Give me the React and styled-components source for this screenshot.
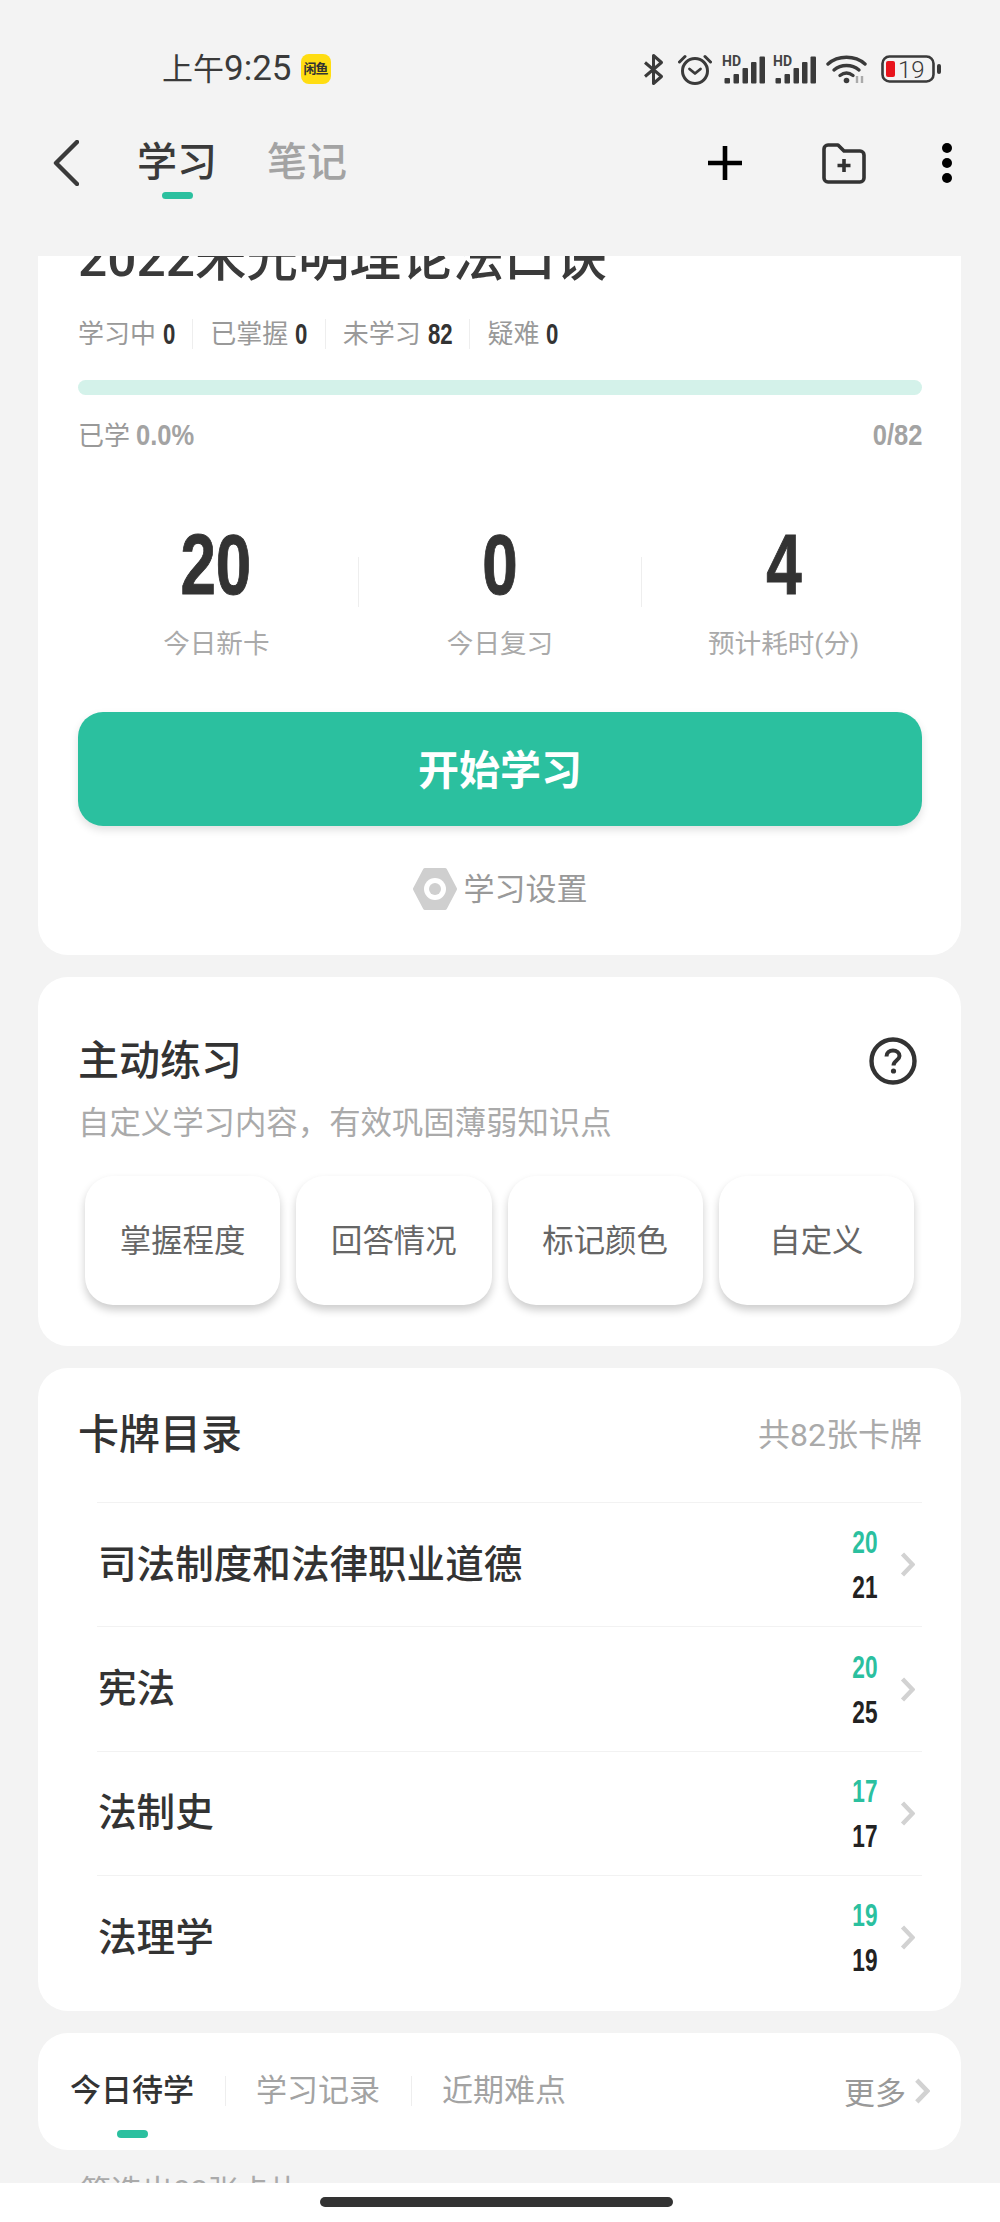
import React from 'react';
import styled, { createGlobalStyle } from 'styled-components';

const GlobalStyle = createGlobalStyle`
  * { box-sizing: border-box; }
  html, body { margin: 0; padding: 0; background: #f3f3f3; }
  body { font-family: Roboto, "Noto Sans CJK SC", sans-serif; color: #333; }
`;

const GREEN = '#2bc09f';
const NUMBER_FONT = '"Liberation Sans", sans-serif';

const Page = styled.div`
  width: 1000px;
  height: 2222px;
  display: flex;
  flex-direction: column;
  overflow: hidden;
  background: #f3f3f3;
`;

const StatusBar = styled.div`
  flex: none;
  height: 138px;
  padding: 0 59px 0 162px;
  display: flex;
  align-items: center;
  justify-content: space-between;
`;

const Clock = styled.div`
  display: flex;
  align-items: center;
  gap: 9px;
  font-size: 31px;
  line-height: 40px;
  color: #3a3a3a;
  span:first-child {
    font-size: 35px;
  }
`;

const ClockCjk = styled.i`
  font-style: normal;
  font-size: 31px;
`;

const Badge = styled.span`
  width: 30px;
  height: 30px;
  border-radius: 8px;
  background: #ffdd12;
  color: #333;
  font-size: 13px;
  font-weight: 700;
  line-height: 30px;
  text-align: center;
  letter-spacing: -1px;
`;

const StatusIcons = styled.div`
  display: flex;
  align-items: center;
`;

const SignalGap = styled.div`
  width: 8px;
`;

const SignalIcon = styled.svg`
  overflow: visible;
`;

const NavBar = styled.div`
  flex: none;
  height: 50px;
  margin-bottom: 68px;
  padding: 0 48px 0 53px;
  display: flex;
  align-items: center;
`;

const NavTab = styled.div`
  position: relative;
  margin-left: ${p => p.$gap}px;
  font-size: 40px;
  line-height: 50px;
  font-weight: 500;
  color: ${p => (p.$active ? '#3a3a3a' : '#a3a3a3')};
  &::after {
    content: '';
    display: ${p => (p.$active ? 'block' : 'none')};
    position: absolute;
    left: 25px;
    bottom: -11px;
    width: 31px;
    height: 7px;
    border-radius: 4px;
    background: ${GREEN};
  }
`;

const NavActions = styled.div`
  margin-left: auto;
  display: flex;
  align-items: center;
  gap: 76px;
`;

const PlusSlot = styled.div`
  display: flex;
  margin-right: 4px;
`;

const Scroller = styled.div`
  flex: 1;
  min-height: 0;
  overflow: hidden;
  padding: 0 39px 0 38px;
  display: flex;
  flex-direction: column;
  gap: 22px;
`;

const Card = styled.section`
  flex: none;
  background: #fff;
  border-radius: 30px;
  padding: 0 39px 0 40px;
`;

const PlanCard = styled(Card)`
  margin-top: -40px;
  padding-top: 13px;
  padding-bottom: 44px;
`;

const PlanTitle = styled.h1`
  margin: 0;
  font-size: 51.5px;
  line-height: 60px;
  font-weight: 500;
  color: #3a3a3a;
  white-space: nowrap;
`;

const Counts = styled.div`
  margin-top: 30px;
  height: 30px;
  display: flex;
  align-items: center;
`;

const Count = styled.div`
  display: flex;
  align-items: center;
  gap: 7px;
  font-size: 26px;
  line-height: 30px;
  color: #999;
  padding-right: 17px;
  margin-right: 17px;
  border-right: ${p => (p.$last ? 'none' : '1px solid #eee')};
`;

// squeezed digits, the app's number face is a condensed one
const CountValue = styled.b`
  display: inline-block;
  font-family: ${NUMBER_FONT};
  font-size: 30px;
  font-weight: 700;
  color: #333;
  transform: scaleX(0.74);
  transform-origin: left center;
  margin-right: ${p => -0.145 * p.$digits}em;
`;

const Track = styled.div`
  margin-top: 31px;
  height: 15px;
  border-radius: 8px;
  background: #d4f2ea;
`;

const TrackLabels = styled.div`
  margin-top: 25px;
  height: 30px;
  display: flex;
  justify-content: space-between;
  font-size: 26px;
  line-height: 30px;
  color: #999;
`;

const TrackValue = styled.span`
  display: inline-block;
  font-family: ${NUMBER_FONT};
  font-size: 29px;
  line-height: 30px;
  font-weight: 700;
  color: #a3a3a3;
  transform: scaleX(0.88);
  transform-origin: ${p => (p.$right ? 'right' : 'left')} center;
`;

const Figures = styled.div`
  margin: 74px -3px 0;
  display: grid;
  grid-template-columns: 1fr 1px 1fr 1px 1fr;
`;

const Figure = styled.div`
  display: flex;
  flex-direction: column;
  align-items: center;
`;

const FigureValue = styled.div`
  font-family: ${NUMBER_FONT};
  font-size: 86px;
  line-height: 80px;
  font-weight: 700;
  color: #333;
  -webkit-text-stroke: 1px #333;
  transform: scaleX(0.74);
`;

const FigureLabel = styled.div`
  margin-top: 25px;
  font-size: 26.6px;
  line-height: 30px;
  color: #aaa;
`;

const FigureRule = styled.div`
  margin-top: 33px;
  height: 50px;
  background: #eee;
`;

const StartButton = styled.button`
  display: block;
  width: 100%;
  height: 114px;
  margin-top: 53px;
  padding: 0 0 5px;
  border: none;
  border-radius: 25px;
  background: ${GREEN};
  box-shadow: 0 4px 8px rgba(0, 0, 0, 0.12);
  color: #fff;
  font-family: inherit;
  font-size: 41px;
  font-weight: 700;
`;

const SettingsLink = styled.div`
  margin-top: 41px;
  height: 44px;
  display: flex;
  align-items: center;
  justify-content: center;
  gap: 7px;
  font-size: 31px;
  color: #999;
  span {
    padding-bottom: 5px;
  }
`;

const PracticeCard = styled(Card)`
  padding-top: 59px;
  padding-bottom: 41px;
`;

const CardHead = styled.div`
  display: flex;
  align-items: center;
  justify-content: space-between;
  height: 50px;
`;

const CardTitle = styled.h2`
  margin: 0;
  font-size: 41px;
  line-height: 50px;
  font-weight: 500;
  color: #333;
`;

const HelpSlot = styled.div`
  padding-right: 5px;
  display: flex;
`;

const CardNote = styled.div`
  margin-top: 18px;
  font-size: 31.4px;
  line-height: 40px;
  color: #aaa;
`;

const Modes = styled.div`
  margin: 32px 8px 0 7px;
  display: grid;
  grid-template-columns: repeat(4, 1fr);
  gap: 16px;
`;

const Mode = styled.div`
  height: 129px;
  padding-bottom: 5px;
  border-radius: 28px;
  background: #fff;
  box-shadow: 0 5px 9px rgba(0, 0, 0, 0.2);
  display: flex;
  align-items: center;
  justify-content: center;
  font-size: 31.4px;
  color: #666;
`;

const CatalogCard = styled(Card)`
  padding-top: 42px;
  padding-bottom: 11px;
`;

const CatalogCount = styled.div`
  font-size: 32px;
  line-height: 50px;
  color: #aaa;
`;

const Catalog = styled.div`
  margin: 42px 0 0 19px;
`;

const Chapter = styled.div`
  height: 124.4px;
  padding-right: 7px;
  border-top: 1px solid #f2f2f2;
  display: flex;
  align-items: center;
`;

const ChapterName = styled.div`
  flex: 1;
  padding: 0 0 8px 1px;
  font-size: 38.6px;
  font-weight: 500;
  color: #333;
`;

const ChapterCounts = styled.div`
  margin-right: 23px;
  padding-top: 2px;
  display: flex;
  flex-direction: column;
  align-items: flex-end;
  gap: 9px;
  font-family: ${NUMBER_FONT};
  font-size: 31px;
  line-height: 36px;
  font-weight: 700;
`;

const DueCount = styled.span`
  color: ${GREEN};
  transform: scaleX(0.73);
  transform-origin: right center;
`;

const TotalCount = styled.span`
  color: #222;
  transform: scaleX(0.73);
  transform-origin: right center;
`;

const TodayCard = styled(Card)`
  height: 117px;
  padding: 43px 31px 0 32px;
`;

const TodayTabs = styled.div`
  height: 30px;
  display: flex;
  align-items: center;
  gap: 30.5px;
`;

const TodayTab = styled.div`
  font-size: 31px;
  line-height: 30px;
  font-weight: ${p => (p.$active ? 500 : 400)};
  color: ${p => (p.$active ? '#333' : '#a3a3a3')};
`;

const TabRule = styled.div`
  width: 1px;
  height: 30px;
  background: #eee;
`;

const More = styled.div`
  margin-left: auto;
  display: flex;
  align-items: center;
  gap: 8px;
  font-size: 31px;
  color: #999;
`;

const TabMark = styled.div`
  width: 31px;
  height: 8px;
  margin: 24px 0 0 47px;
  border-radius: 4px;
  background: ${GREEN};
`;

const Filtered = styled.div`
  flex: none;
  padding-left: 42px;
  font-size: 31px;
  line-height: 40px;
  color: #aaa;
`;

const HomeBar = styled.div`
  flex: none;
  height: 39px;
  background: #fff;
  display: flex;
  justify-content: center;
  padding: 14px 7px 0 0;
`;

const HomePill = styled.div`
  width: 353px;
  height: 10px;
  border-radius: 5px;
  background: #333;
`;

const Signal = () => (
  <SignalIcon width="43" height="29" viewBox="0 0 43 29">
    <text x="0" y="11" fontFamily="Roboto, sans-serif" fontSize="14" fontWeight="700" fill="#444">HD</text>
    <g fill="#3a3a3a">
      <rect x="2.5" y="23" width="5.5" height="5.5" rx="1" />
      <rect x="11.5" y="19" width="5.5" height="9.5" rx="1" />
      <rect x="20.5" y="13" width="5.5" height="15.5" rx="1" />
      <rect x="29" y="7" width="5.5" height="21.5" rx="1" />
      <rect x="37.5" y="1.5" width="5.5" height="27" rx="1" />
    </g>
  </SignalIcon>
);

const StatusGlyphs = () => (
  <StatusIcons>
    <svg width="22" height="33" viewBox="0 0 22 33" style={{ marginRight: 13 }}>
      <path d="M2 9.5 18.5 23.5 10.5 30.5V2.5L18.5 9.5 2 23.5" fill="none" stroke="#3a3a3a" strokeWidth="3" strokeLinejoin="round" />
    </svg>
    <svg width="34" height="32" viewBox="0 0 34 32" style={{ marginRight: 10 }}>
      <circle cx="17" cy="18" r="12.5" fill="none" stroke="#3a3a3a" strokeWidth="3" />
      <path d="M11.5 16 17 20.5 22.5 16" fill="none" stroke="#3a3a3a" strokeWidth="2.8" strokeLinecap="round" strokeLinejoin="round" />
      <path d="M1.5 9 7 3.5M32.5 9 27 3.5" stroke="#3a3a3a" strokeWidth="3" strokeLinecap="round" />
    </svg>
    <Signal />
    <SignalGap />
    <Signal />
    <svg width="43" height="30" viewBox="0 0 43 30" style={{ marginLeft: 10, marginRight: 12 }}>
      <path d="M2 10C12 1 29 1 39 10" fill="none" stroke="#3a3a3a" strokeWidth="3.4" strokeLinecap="round" />
      <path d="M8 16C15 10 26 10 33 16" fill="none" stroke="#3a3a3a" strokeWidth="3.4" strokeLinecap="round" />
      <path d="M14 21.5C18 18.5 23 18.5 27 21.5" fill="none" stroke="#3a3a3a" strokeWidth="3.4" strokeLinecap="round" />
      <circle cx="20.5" cy="26.5" r="2.8" fill="#3a3a3a" />
      <path d="M31 29V22M36 22V29" stroke="#aaa" strokeWidth="2.4" />
    </svg>
    <svg width="60" height="28" viewBox="0 0 60 28">
      <rect x="1.5" y="1.5" width="51" height="25" rx="7" fill="none" stroke="#3a3a3a" strokeWidth="2.6" />
      <rect x="5" y="6" width="9" height="16" rx="2" fill="#e8141c" />
      <text x="17" y="23" fontFamily="Roboto, sans-serif" fontSize="24" fontWeight="300" fill="#3a3a3a">19</text>
      <rect x="56" y="9" width="4" height="10" rx="2" fill="#3a3a3a" />
    </svg>
  </StatusIcons>
);

const Chevron = ({ width = 15, height = 25 }) => (
  <svg width={width} height={height} viewBox="0 0 15 25">
    <path d="M2.5 2 12.5 12.5 2.5 23" fill="none" stroke="#d2d2d2" strokeWidth="4.4" />
  </svg>
);

const CHAPTERS = [
  { name: '司法制度和法律职业道德', due: 20, total: 21 },
  { name: '宪法', due: 20, total: 25 },
  { name: '法制史', due: 17, total: 17 },
  { name: '法理学', due: 19, total: 19 },
];

const COUNTS = [
  { label: '学习中', value: 0 },
  { label: '已掌握', value: 0 },
  { label: '未学习', value: 82 },
  { label: '疑难', value: 0 },
];

const MODES = ['掌握程度', '回答情况', '标记颜色', '自定义'];

export default function App() {
  return (
    <Page>
      <GlobalStyle />
      <StatusBar>
        <Clock>
          <span><ClockCjk>上午</ClockCjk>9:25</span>
          <Badge>闲鱼</Badge>
        </Clock>
        <StatusGlyphs />
      </StatusBar>

      <NavBar>
        <svg width="26" height="46" viewBox="0 0 26 46">
          <path d="M24 2 3 23 24 44" fill="none" stroke="#3a3a3a" strokeWidth="4.4" strokeLinecap="round" strokeLinejoin="round" />
        </svg>
        <NavTab $active $gap={58}>学习</NavTab>
        <NavTab $gap={50}>笔记</NavTab>
        <NavActions>
          <PlusSlot>
            <svg width="34" height="34" viewBox="0 0 34 34">
              <path d="M17 0V34M0 17H34" stroke="#000" strokeWidth="4.6" />
            </svg>
          </PlusSlot>
          <svg width="44" height="41" viewBox="0 0 44 41">
            <path d="M2 6a4 4 0 0 1 4-4h10l6 6h16a4 4 0 0 1 4 4v23a4 4 0 0 1-4 4H6a4 4 0 0 1-4-4z" fill="none" stroke="#333" strokeWidth="3.6" strokeLinejoin="round" />
            <path d="M22 16V29M15.5 22.5H28.5" stroke="#333" strokeWidth="3.6" />
          </svg>
          <svg width="10" height="40" viewBox="0 0 10 40">
            <circle cx="5" cy="5" r="5" fill="#000" />
            <circle cx="5" cy="20" r="5" fill="#000" />
            <circle cx="5" cy="35" r="5" fill="#000" />
          </svg>
        </NavActions>
      </NavBar>

      <Scroller>
        <PlanCard>
          <PlanTitle>2022米光明理论法口诀</PlanTitle>
          <Counts>
            {COUNTS.map((c, i) => (
              <Count key={c.label} $last={i === COUNTS.length - 1}>
                {c.label}
                <CountValue $digits={String(c.value).length}>{c.value}</CountValue>
              </Count>
            ))}
          </Counts>
          <Track />
          <TrackLabels>
            <span>已学 <TrackValue>0.0%</TrackValue></span>
            <TrackValue $right>0/82</TrackValue>
          </TrackLabels>
          <Figures>
            <Figure>
              <FigureValue>20</FigureValue>
              <FigureLabel>今日新卡</FigureLabel>
            </Figure>
            <FigureRule />
            <Figure>
              <FigureValue>0</FigureValue>
              <FigureLabel>今日复习</FigureLabel>
            </Figure>
            <FigureRule />
            <Figure>
              <FigureValue>4</FigureValue>
              <FigureLabel>预计耗时(分)</FigureLabel>
            </Figure>
          </Figures>
          <StartButton>开始学习</StartButton>
          <SettingsLink>
            <svg width="44" height="44" viewBox="0 0 44 44">
              <path d="M12 3H32L42 22 32 41H12L2 22Z" fill="#cfcfcf" stroke="#cfcfcf" strokeWidth="4" strokeLinejoin="round" />
              <circle cx="22" cy="22" r="11" fill="#fff" />
              <circle cx="22" cy="22" r="6" fill="#cfcfcf" />
            </svg>
            <span>学习设置</span>
          </SettingsLink>
        </PlanCard>

        <PracticeCard>
          <CardHead>
            <CardTitle>主动练习</CardTitle>
            <HelpSlot>
              <svg width="48" height="48" viewBox="0 0 48 48">
                <circle cx="24" cy="24" r="21.5" fill="none" stroke="#333" strokeWidth="4.4" />
                <path d="M17.5 19.5C17.5 15.5 20.5 13.5 24 13.5 27.5 13.5 30.5 15.8 30.5 19 30.5 23 24.5 23.5 24.5 28.5" fill="none" stroke="#333" strokeWidth="4" />
                <circle cx="24.5" cy="34" r="2.6" fill="#333" />
              </svg>
            </HelpSlot>
          </CardHead>
          <CardNote>自定义学习内容，有效巩固薄弱知识点</CardNote>
          <Modes>
            {MODES.map(m => <Mode key={m}>{m}</Mode>)}
          </Modes>
        </PracticeCard>

        <CatalogCard>
          <CardHead>
            <CardTitle>卡牌目录</CardTitle>
            <CatalogCount>共82张卡牌</CatalogCount>
          </CardHead>
          <Catalog>
            {CHAPTERS.map(c => (
              <Chapter key={c.name}>
                <ChapterName>{c.name}</ChapterName>
                <ChapterCounts>
                  <DueCount>{c.due}</DueCount>
                  <TotalCount>{c.total}</TotalCount>
                </ChapterCounts>
                <Chevron />
              </Chapter>
            ))}
          </Catalog>
        </CatalogCard>

        <TodayCard>
          <TodayTabs>
            <TodayTab $active>今日待学</TodayTab>
            <TabRule />
            <TodayTab>学习记录</TodayTab>
            <TabRule />
            <TodayTab>近期难点</TodayTab>
            <More>
              更多
              <Chevron width={16} height={26} />
            </More>
          </TodayTabs>
          <TabMark />
        </TodayCard>

        <Filtered>筛选出82张卡片</Filtered>
      </Scroller>

      <HomeBar>
        <HomePill />
      </HomeBar>
    </Page>
  );
}
